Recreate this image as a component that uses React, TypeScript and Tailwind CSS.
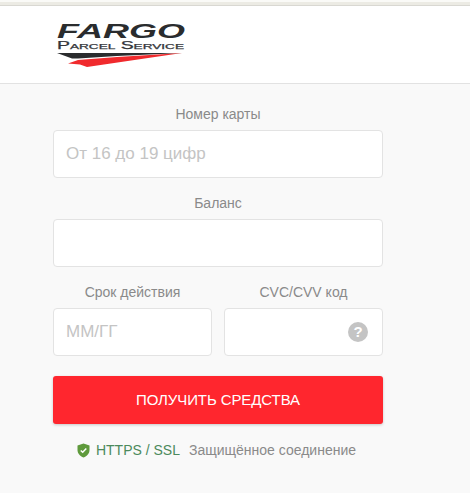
export default function App() {
  const font = "font-['Liberation_Sans',Arial,sans-serif]";
  const input = "h-[48px] bg-white border border-[#e3e3e3] rounded-[4px] flex items-center px-3 text-[17px] text-[#c4c4c4]";
  const label = "text-center text-[14px] leading-[16px] text-[#8a8a8a] mb-[8px]";
  return (
    <div className={`${font} w-[470px] h-[493px] bg-[#f9f9f9] overflow-hidden`}>
      <div className="h-[2px] bg-[#fafaf7]" />
      <div className="h-[4px] bg-[#ecebe4] border-b border-[#d9d8d2]" />
      <header className="h-[78px] bg-white border-b border-[#e2e2e2] pl-[55px] pt-[14px]">
        <svg width="132" height="54" viewBox="0 0 132 54">
          <text x="2" y="18" textLength="128" lengthAdjust="spacingAndGlyphs" fontFamily="'Liberation Sans',Arial,sans-serif" fontWeight="700" fontStyle="italic" fontSize="21" fill="#2a2c2e">FARGO</text>
          <text x="2" y="29" textLength="127" lengthAdjust="spacingAndGlyphs" fontFamily="'Liberation Sans',Arial,sans-serif" fontWeight="400" fontSize="10" fontVariant="small-caps" stroke="#33353a" strokeWidth="0.25" fill="#33353a">Parcel Service</text>
          <path d="M2 33 L127 33 L62 36 L23 38.500 L17 38.500 Z" fill="#2a2c2e" />
          <path d="M127 33 L32 47 L25 44.500 L13 43.500 L23 40 L62 37 Z" fill="#f02a2d" />
        </svg>
      </header>
      <main className="w-[330px] ml-[53px] pt-[22px]">
        <div className={label}>Номер карты</div>
        <div className={input}>От 16 до 19 цифр</div>
        <div className={`${label} mt-[17px]`}>Баланс</div>
        <div className={input} />
        <div className="flex gap-[12px] mt-[17px]">
          <div className="w-[159px]">
            <div className={label}>Срок действия</div>
            <div className={input}>ММ/ГГ</div>
          </div>
          <div className="w-[159px]">
            <div className={label}>CVC/CVV код</div>
            <div className={`${input} justify-end pr-[14px]`}>
              <span className="w-[20px] h-[20px] rounded-full bg-[#c4c4c4] text-white text-[15px] font-bold flex items-center justify-center">?</span>
            </div>
          </div>
        </div>
        <button className="mt-[20px] w-[330px] h-[48px] rounded-[3px] bg-[#ff262e] text-white text-[15px] tracking-[-0.1px] shadow-[0_1px_3px_rgba(0,0,0,0.2)]">
          ПОЛУЧИТЬ СРЕДСТВА
        </button>
        <div className="mt-[18px] flex items-center justify-center text-[14px] leading-[16px] mr-[3px]">
          <svg width="13" height="15" viewBox="0 0 13 15" className="mr-[6px]">
            <path d="M6.500 0.500 L12.500 2.500 V7 C12.500 10.500 10 13 6.500 14.500 C3 13 0.500 10.500 0.500 7 V2.500 Z" fill="#5f9a3c" />
            <path d="M3.800 7.500 L5.700 9.300 L9.300 5.500" fill="none" stroke="#fff" strokeWidth="1.500" />
          </svg>
          <span className="text-[#4c8a5c]">HTTPS / SSL</span>
          <span className="text-[#8a8a8a] ml-[9px]">Защищённое соединение</span>
        </div>
      </main>
    </div>
  );
}
